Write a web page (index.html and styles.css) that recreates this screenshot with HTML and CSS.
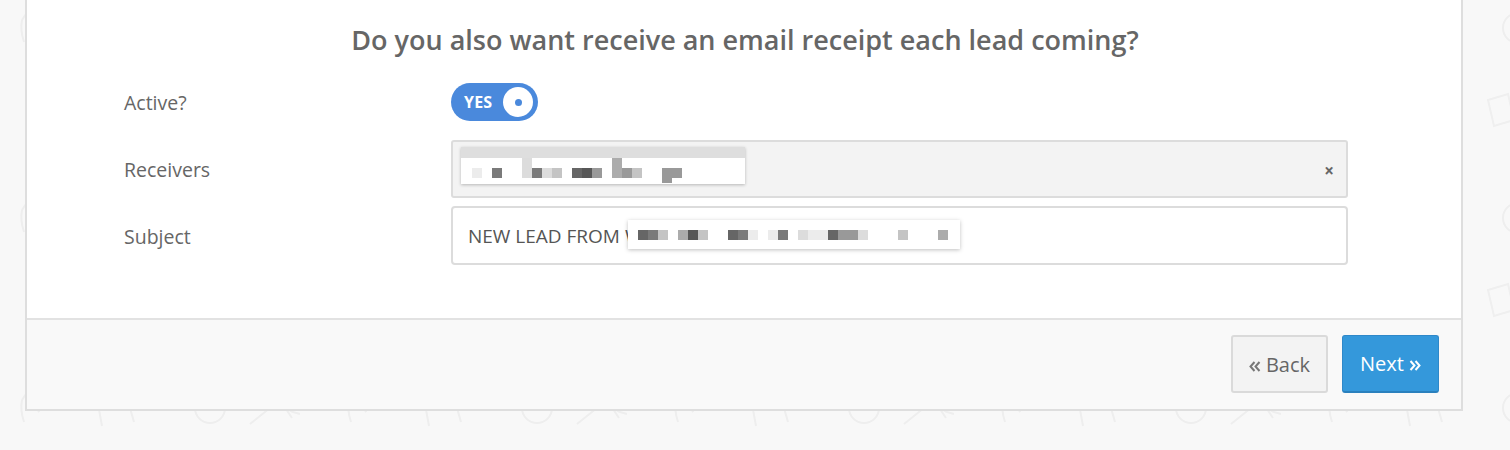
FILE: index.html
```html
<!DOCTYPE html>
<html lang="en">
<head>
<meta charset="utf-8">
<title>Email receipt</title>
<link rel="stylesheet" href="styles.css">
</head>
<body>
<div class="card">
  <div class="card-body">
    <h2 class="title">Do you also want receive an email receipt each lead coming?</h2>
    <div class="row row-toggle">
      <label class="label">Active?</label>
      <div class="field">
        <div class="toggle">
          <span class="toggle-text">YES</span>
          <span class="knob"><span class="dot"></span></span>
        </div>
      </div>
    </div>
    <div class="row">
      <label class="label">Receivers</label>
      <div class="field">
        <div class="select">
          <div class="chip">
            <div class="chip-top"></div>
            <div class="cells cells-up">
              <span class="c"></span><span class="c"></span><span class="c"></span><span class="c"></span><span class="c"></span><span class="c"></span>
              <span class="c g2"></span><span class="c"></span><span class="c"></span><span class="c"></span><span class="c"></span><span class="c"></span><span class="c"></span><span class="c"></span><span class="c"></span><span class="c g4"></span>
            </div>
            <div class="cells cells-mid">
              <span class="c"></span><span class="c g1"></span><span class="c"></span><span class="c g6"></span><span class="c"></span><span class="c"></span>
              <span class="c g2"></span><span class="c g6"></span><span class="c g2"></span><span class="c g3"></span><span class="c"></span>
              <span class="c g7"></span><span class="c g8"></span><span class="c g5"></span><span class="c"></span>
              <span class="c g4"></span><span class="c g5"></span><span class="c g3"></span><span class="c"></span><span class="c"></span>
              <span class="c g5"></span><span class="c g5"></span>
            </div>
            <div class="cells cells-low">
              <span class="c"></span><span class="c"></span><span class="c"></span><span class="c"></span><span class="c"></span><span class="c"></span><span class="c"></span><span class="c"></span><span class="c"></span><span class="c"></span><span class="c"></span><span class="c"></span><span class="c"></span><span class="c"></span><span class="c"></span><span class="c"></span><span class="c"></span><span class="c"></span><span class="c"></span><span class="c"></span>
              <span class="c g5"></span>
            </div>
          </div>
          <span class="clear">&times;</span>
        </div>
      </div>
    </div>
    <div class="row row-last">
      <label class="label">Subject</label>
      <div class="field">
        <div class="input">
          <span class="input-text">NEW LEAD FROM W</span>
          <div class="redact">
            <div class="cells">
              <span class="c g7"></span><span class="c g6"></span><span class="c g3"></span><span class="c"></span>
              <span class="c g4"></span><span class="c g8"></span><span class="c g3"></span><span class="c"></span><span class="c"></span>
              <span class="c g7"></span><span class="c g6"></span><span class="c g1"></span><span class="c"></span>
              <span class="c g1"></span><span class="c g6"></span><span class="c"></span>
              <span class="c g2"></span><span class="c g1"></span><span class="c g1"></span>
              <span class="c g7"></span><span class="c g5"></span><span class="c g5"></span><span class="c g2"></span>
              <span class="c"></span><span class="c"></span><span class="c"></span>
              <span class="c g3"></span><span class="c"></span><span class="c"></span><span class="c"></span>
              <span class="c g4"></span>
            </div>
          </div>
        </div>
      </div>
    </div>
  </div>
  <div class="card-footer">
    <button class="btn btn-back">
      <svg class="chev" width="12" height="11" viewBox="0 0 12 11"><path d="M5.5 1 L1.5 5.5 L5.5 10 M10.5 1 L6.5 5.5 L10.5 10" fill="none" stroke="currentColor" stroke-width="2"/></svg>
      <span>Back</span>
    </button>
    <button class="btn btn-next">
      <span>Next</span>
      <svg class="chev" width="12" height="11" viewBox="0 0 12 11"><path d="M1.5 1 L5.5 5.5 L1.5 10 M6.5 1 L10.5 5.5 L6.5 10" fill="none" stroke="currentColor" stroke-width="2"/></svg>
    </button>
  </div>
</div>
</body>
</html>
```

FILE: styles.css
```css
html, body {
  margin: 0;
  padding: 0;
}
body {
  width: 1510px;
  height: 450px;
  overflow: hidden;
  font-family: "Open Sans", "Liberation Sans", sans-serif;
  color: #666;
  background-color: #f8f8f8;
  background-image: url("data:image/svg+xml;utf8,<svg xmlns='http://www.w3.org/2000/svg' width='327' height='190'><g fill='none' stroke='%23eeeeee' stroke-width='2'><path d='M22 40 L30 28 Q34 24 38 28 L46 38 Q48 42 44 46 L38 52 M22 40 Q20 50 24 62'/><path d='M98 36 L118 30 M104 34 Q96 36 98 44 L102 66 M118 30 Q122 26 124 32 L126 40 M126 34 L134 62'/><circle cx='210' cy='48' r='15'/><path d='M250 64 L280 40 L292 58 M280 40 Q286 52 300 54'/></g><g fill='none' stroke='%23efefef' stroke-width='2'><path d='M30 130 Q22 150 30 168 Q40 176 48 166 L52 140 Q46 124 30 130'/><path d='M180 120 L200 114 L206 140 L186 146 Z'/></g></svg>");
  background-repeat: repeat;
  background-position: 0 -20px;
}
.card {
  margin-left: 25px;
  width: 1434px;
  border: 2px solid #dedede;
  border-top: none;
  background: #fff;
}
.card-body {
  padding: 24px 113px 53px 97px;
  background: #fff;
}
.title {
  margin: 0 0 27px 0;
  text-align: center;
  font-size: 27px;
  line-height: 32px;
  font-weight: 600;
  color: #666;
  padding-left: 18px;
}
.row {
  display: flex;
  align-items: center;
  margin-bottom: 8px;
}
.row-toggle {
  margin-bottom: 19px;
}
.row-last {
  margin-bottom: 0;
}
.label {
  width: 327px;
  flex: none;
  font-size: 19.5px;
  color: #666;
  line-height: 26px;
  padding-top: 2px;
}
.field {
  flex: 1;
}
.toggle {
  width: 87px;
  height: 38px;
  border-radius: 19px;
  background: #4a89dc;
  display: flex;
  align-items: center;
  box-sizing: border-box;
  padding: 0 5px 0 13px;
  justify-content: space-between;
}
.toggle-text {
  color: #fff;
  font-weight: 700;
  font-size: 16px;
  letter-spacing: 0.2px;
}
.knob {
  width: 30px;
  height: 30px;
  border-radius: 50%;
  background: #fff;
  display: flex;
  align-items: center;
  justify-content: center;
}
.dot {
  width: 7px;
  height: 7px;
  border-radius: 50%;
  background: #4a89dc;
}
.select {
  height: 58px;
  box-sizing: border-box;
  border: 2px solid #dcdcdc;
  border-radius: 3px;
  background: #f3f3f3;
  display: flex;
  align-items: flex-start;
  justify-content: space-between;
  padding: 5px 12px 0 8px;
}
.chip {
  width: 284px;
  height: 37px;
  background: #fff;
  box-shadow: 0 1px 3px rgba(0,0,0,0.25);
  position: relative;
  overflow: hidden;
}
.chip-top {
  height: 11px;
  background: #dedede;
}
.cells {
  display: flex;
  padding-left: 1px;
}
.cells-up {
  position: absolute;
  top: 11px;
  left: 0;
}
.cells-mid {
  margin-top: 10px;
}
.cells-low {
  height: 5px;
  overflow: hidden;
}
.c {
  width: 10px;
  height: 10px;
  flex: none;
}
.g1 { background: #ececec; }
.g2 { background: #dcdcdc; }
.g3 { background: #c4c4c4; }
.g4 { background: #acacac; }
.g5 { background: #999; }
.g6 { background: #7a7a7a; }
.g7 { background: #666; }
.g8 { background: #575757; }
.clear {
  align-self: center;
  font-size: 17px;
  font-weight: 700;
  color: #666;
  line-height: 1;
  margin-top: -2px;
}
.input {
  height: 59px;
  box-sizing: border-box;
  border: 2px solid #dcdcdc;
  border-radius: 4px;
  background: #fff;
  display: flex;
  align-items: center;
  padding-left: 15px;
  position: relative;
}
.input-text {
  font-size: 19px;
  color: #555;
}
.redact {
  position: absolute;
  left: 175px;
  top: 12px;
  width: 332px;
  height: 29px;
  background: #fff;
  box-shadow: 0 1px 4px rgba(0,0,0,0.25);
  display: flex;
  align-items: center;
  padding-left: 9px;
  box-sizing: border-box;
}
.card-footer {
  border-top: 2px solid #e2e2e2;
  background: #f9f9f9;
  display: flex;
  justify-content: flex-end;
  gap: 14px;
  padding: 15px 22px 16px 0;
}
.btn {
  width: 97px;
  height: 58px;
  box-sizing: border-box;
  border-radius: 3px;
  font-family: "Open Sans", "Liberation Sans", sans-serif;
  font-size: 20px;
  padding: 0;
  cursor: pointer;
  display: flex;
  align-items: center;
  justify-content: center;
  gap: 5px;
}
.chev {
  margin-top: 4px;
  flex: none;
}
.btn-back {
  background: #f3f3f3;
  border: 2px solid #dadada;
  color: #666;
}
.btn-back .chev {
  color: #777;
}
.btn-next {
  background: #3498db;
  border: 1px solid #2e88c9;
  border-bottom: 2px solid #2a80bd;
  color: #fff;
}
```
